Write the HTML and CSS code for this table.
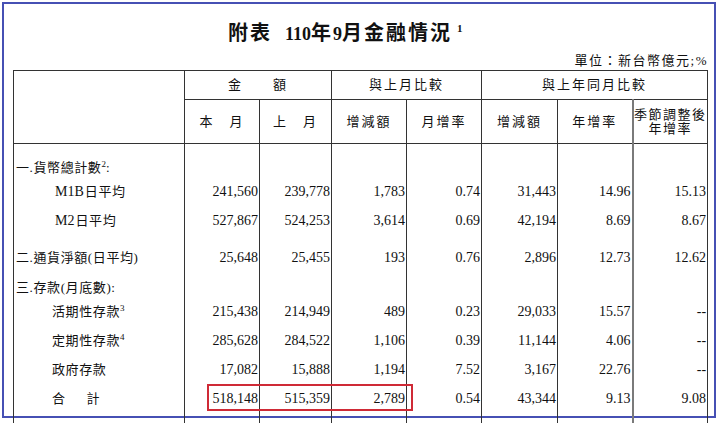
FILE: index.html
```html
<!DOCTYPE html>
<html lang="zh-Hant">
<head>
<meta charset="utf-8">
<title>附表 110年9月金融情況</title>
<link rel="stylesheet" href="styles.css">
</head>
<body>
<div class="frame">
  <h1 class="title">附表<span class="gap"></span><span class="num">110</span>年<span class="num">9</span>月金融情況<span class="tsup">1</span></h1>
  <div class="unit">單位：新台幣億元;%</div>
  <table class="fin">
    <colgroup>
      <col class="w-label">
      <col class="w75"><col class="w72"><col class="w75"><col class="w75">
      <col class="w76"><col class="w75"><col class="w75">
    </colgroup>
    <thead>
      <tr class="hr1">
        <th rowspan="2"></th>
        <th colspan="2">金　　額</th>
        <th colspan="2">與上月比較</th>
        <th colspan="3">與上年同月比較</th>
      </tr>
      <tr class="hr2">
        <th>本　月</th>
        <th>上　月</th>
        <th>增減額</th>
        <th>月增率</th>
        <th>增減額</th>
        <th>年增率</th>
        <th class="sa">季節調整後<br>年增率</th>
      </tr>
    </thead>
    <tbody>
      <tr class="r34">
        <td class="lab">一.貨幣總計數<sup>2</sup>:</td>
        <td></td><td></td><td></td><td></td><td></td><td></td><td class="sa"></td>
      </tr>
      <tr class="r24">
        <td class="lab ind"><span class="lat">M1B</span>日平均</td>
        <td>241,560</td><td>239,778</td><td>1,783</td><td>0.74</td><td>31,443</td><td>14.96</td><td class="sa">15.13</td>
      </tr>
      <tr class="r29">
        <td class="lab ind"><span class="lat">M2</span>日平均</td>
        <td>527,867</td><td>524,253</td><td>3,614</td><td>0.69</td><td>42,194</td><td>8.69</td><td class="sa">8.67</td>
      </tr>
      <tr class="r37">
        <td class="lab">二.通貨淨額(日平均)</td>
        <td>25,648</td><td>25,455</td><td>193</td><td>0.76</td><td>2,896</td><td>12.73</td><td class="sa">12.62</td>
      </tr>
      <tr class="r30">
        <td class="lab">三.存款(月底數):</td>
        <td></td><td></td><td></td><td></td><td></td><td></td><td class="sa"></td>
      </tr>
      <tr class="r24">
        <td class="lab ind2">活期性存款<sup>3</sup></td>
        <td>215,438</td><td>214,949</td><td>489</td><td>0.23</td><td>29,033</td><td>15.57</td><td class="sa">--</td>
      </tr>
      <tr class="r29">
        <td class="lab ind2">定期性存款<sup>4</sup></td>
        <td>285,628</td><td>284,522</td><td>1,106</td><td>0.39</td><td>11,144</td><td>4.06</td><td class="sa">--</td>
      </tr>
      <tr class="r29">
        <td class="lab ind2">政府存款</td>
        <td>17,082</td><td>15,888</td><td>1,194</td><td>7.52</td><td>3,167</td><td>22.76</td><td class="sa">--</td>
      </tr>
      <tr class="r29">
        <td class="lab ind2">合<span class="sp"></span>計</td>
        <td>518,148</td><td>515,359</td><td>2,789</td><td>0.54</td><td>43,344</td><td>9.13</td><td class="sa">9.08</td>
      </tr>
      <tr class="rfill">
        <td></td><td></td><td></td><td></td><td></td><td></td><td></td><td class="sa"></td>
      </tr>
    </tbody>
  </table>
  <div class="redbox"></div>
</div>
</body>
</html>
```
FILE: styles.css
```css
html, body {
  margin: 0;
  padding: 0;
  background: #ffffff;
  overflow: hidden;
}
body {
  width: 720px;
  height: 423px;
  font-family: "Liberation Serif", "Noto Sans CJK TC", serif;
  color: #111111;
}
.frame {
  position: relative;
  box-sizing: border-box;
  margin: 2px 0 0 2px;
  width: 714px;
  height: 416px;
  border: 2px solid #4650b4;
  padding: 15px 0 0 9px;
}
.title {
  margin: 0;
  height: 28px;
  line-height: 28px;
  padding-left: 215px;
  font-size: 20px;
  font-weight: bold;
  letter-spacing: 2px;
  white-space: nowrap;
}
.title .num {
  font-size: 18px;
  letter-spacing: 0;
}
.title .gap {
  display: inline-block;
  width: 13px;
}
.title .tsup {
  display: inline-block;
  margin-left: 5px;
  font-size: 11px;
  line-height: 11px;
  vertical-align: 8px;
  letter-spacing: 0;
}
.unit {
  width: 695px;
  margin-top: 6px;
  text-align: right;
  font-size: 13px;
  line-height: 16px;
  letter-spacing: 1.5px;
  white-space: nowrap;
}
.fin {
  margin-top: 1px;
  width: 694px;
  table-layout: fixed;
  border-collapse: collapse;
  border-top: 1px solid #333333;
}
.w-label { width: 171px; }
.w75 { width: 75px; }
.w72 { width: 72px; }
.w76 { width: 76px; }
.fin th,
.fin td {
  padding: 0;
  border-left: 1px solid #333333;
  border-right: 1px solid #333333;
}
.fin thead th {
  border: 1px solid #333333;
  font-weight: normal;
  font-size: 13px;
  line-height: 14px;
  letter-spacing: 2px;
  text-align: center;
  vertical-align: middle;
  white-space: nowrap;
}
.fin .hr1 th { height: 28px; }
.fin .hr2 th { height: 43px; }
.fin th.sa,
.fin td.sa {
  border-left: 2px solid #7a7a7a;
}
.fin thead th.sa {
  border-left: 2px solid #7a7a7a;
  letter-spacing: 1.5px;
}
.fin tbody td {
  font-size: 14px;
  line-height: 18px;
  padding: 0 1px 1px 0;
  text-align: right;
  vertical-align: bottom;
  white-space: nowrap;
}
.fin tbody td.lab {
  text-align: left;
  font-size: 13px;
  letter-spacing: 0.6px;
  padding-left: 2px;
}
.fin tbody td.ind {
  padding-left: 41px;
}
.fin tbody td.ind2 {
  padding-left: 38px;
}
.fin .lat {
  font-size: 14px;
  letter-spacing: 0;
  margin-right: 1px;
}
.fin sup {
  font-size: 9px;
  line-height: 0;
  vertical-align: 5px;
  letter-spacing: 0;
}
.fin .sp {
  display: inline-block;
  width: 21px;
}
.r34 { height: 34px; }
.r24 { height: 24px; }
.r29 { height: 29px; }
.r37 { height: 37px; }
.r30 { height: 30px; }
.rfill { height: 14px; }
.redbox {
  position: absolute;
  left: 203px;
  top: 380px;
  box-sizing: border-box;
  width: 206px;
  height: 27px;
  border: 2px solid #cf2a36;
}
```
